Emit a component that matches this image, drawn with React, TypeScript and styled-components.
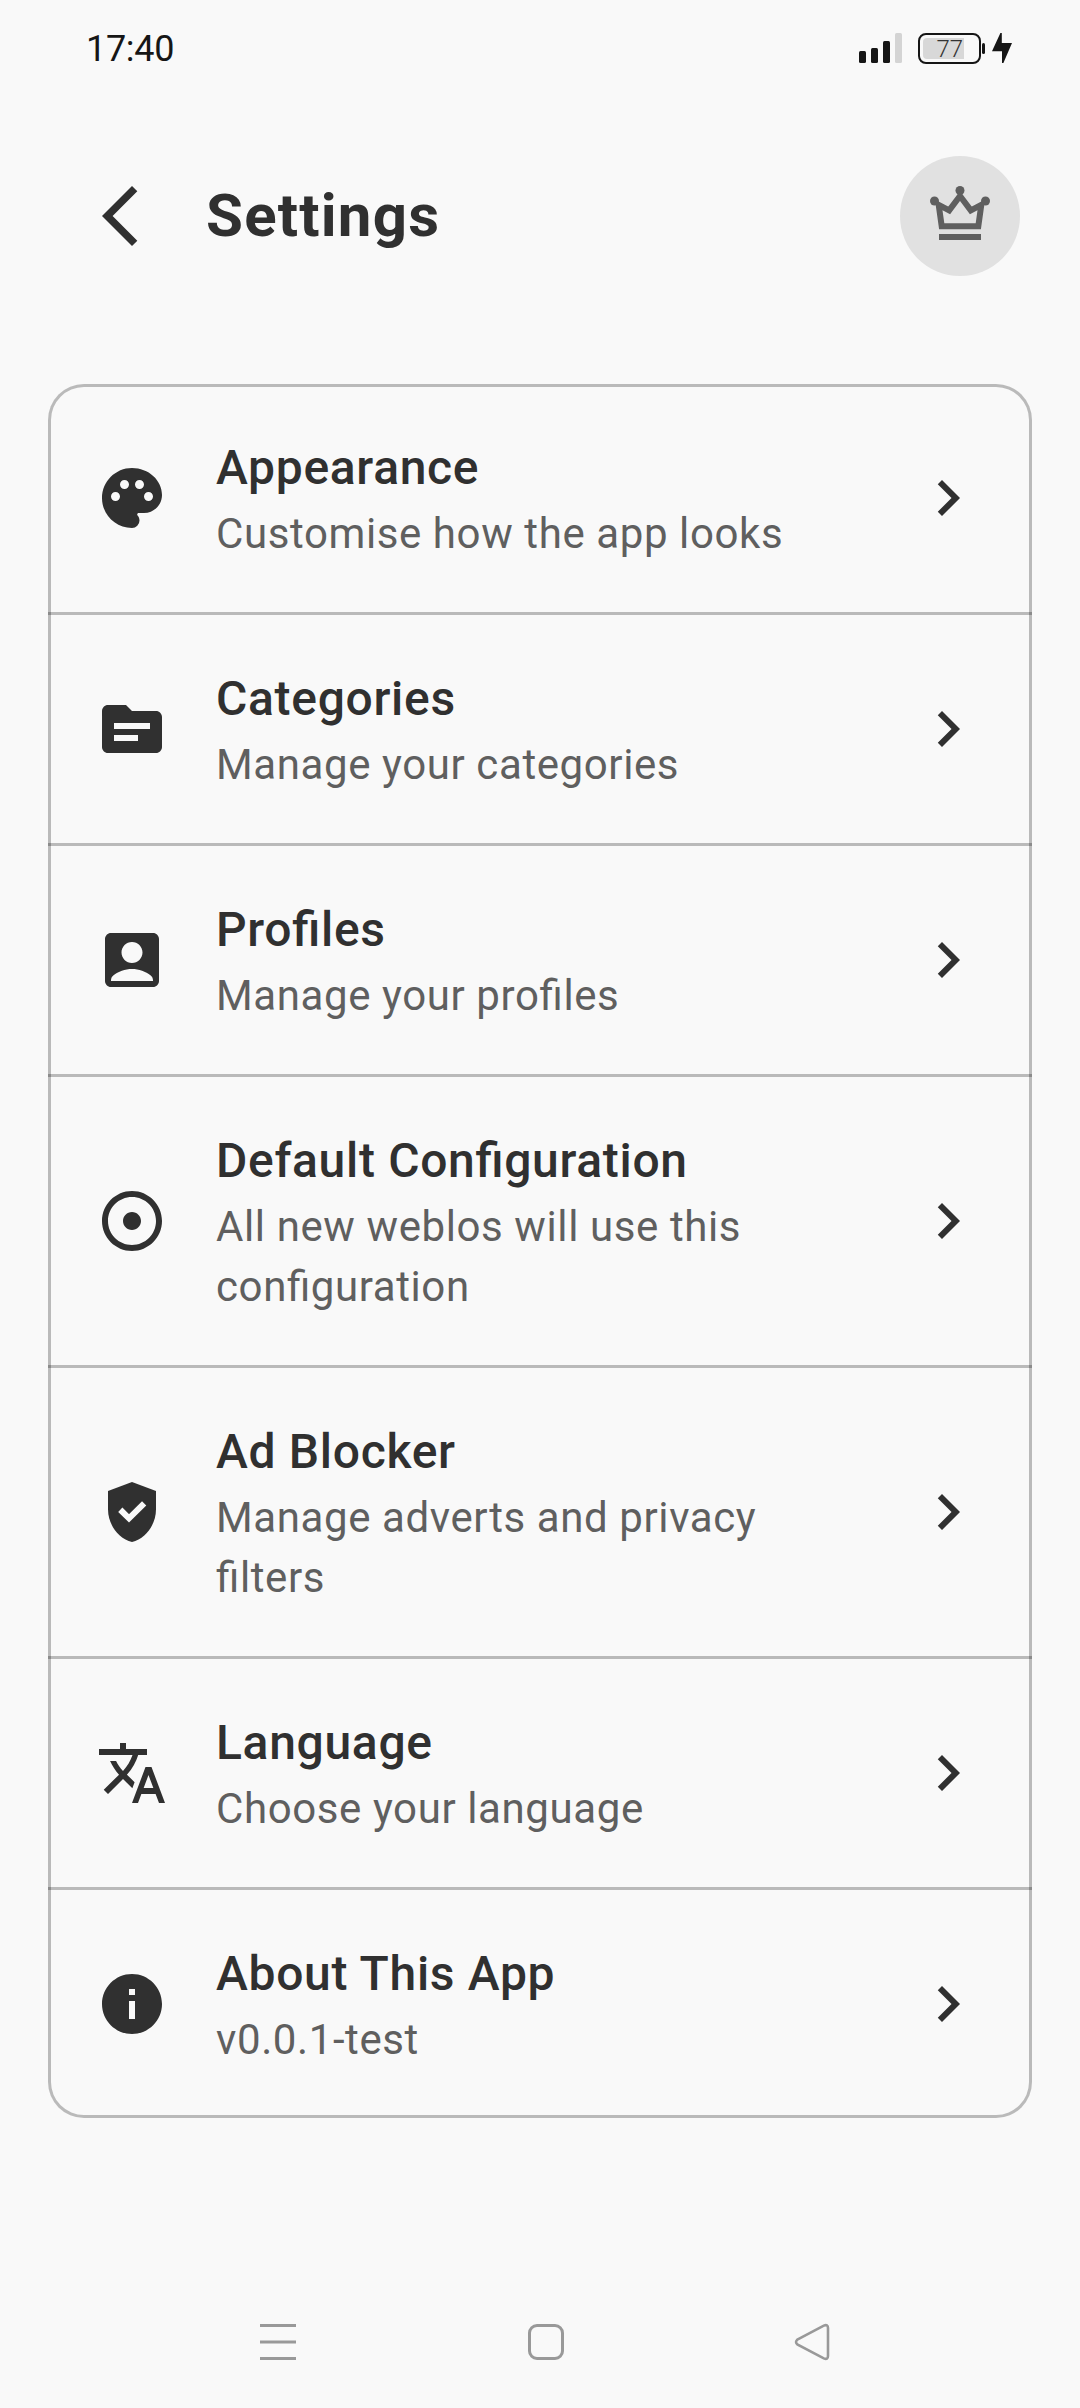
import React from 'react';
import styled, { createGlobalStyle } from 'styled-components';
import {
  MdAccountBox,
  MdAdjust,
  MdArrowBackIosNew,
  MdChevronRight,
  MdInfo,
  MdPalette,
  MdTopic,
  MdTranslate,
} from 'react-icons/md';

const ink = '#303030';
const muted = '#5f5f5f';
const line = 'rgba(0, 0, 0, 0.25)';

const GlobalStyle = createGlobalStyle`
  * { box-sizing: border-box; }
  body {
    margin: 0;
    background: #f9f9f9;
    font-family: Roboto, sans-serif;
    font-feature-settings: 'liga' 1;
  }
`;

const Screen = styled.div`
  display: flex;
  flex-direction: column;
  width: 1080px;
  height: 2408px;
  color: ${ink};
  background: #f9f9f9;
`;

const StatusBar = styled.div`
  display: flex;
  align-items: center;
  justify-content: space-between;
  height: 96px;
  padding: 0 68px 0 86px;
  color: #161616;
`;

const Clock = styled.span`
  padding-top: 2px;
  font-size: 36px;
  line-height: 42px;
  letter-spacing: -0.3px;
`;

const StatusIcons = styled.div`
  display: flex;
  align-items: center;
`;

const Signal = styled.div`
  display: flex;
  align-items: flex-end;
  gap: 5px;
  height: 30px;
  margin-right: 16px;
`;

const Bar = styled.span<{ $height: number; $dim?: boolean }>`
  width: 7px;
  height: ${(p) => p.$height}px;
  border-radius: 1.5px;
  background: ${(p) => (p.$dim ? '#d4d4d4' : '#161616')};
`;

const Battery = styled.div`
  display: flex;
  width: 63px;
  height: 31px;
  padding: 3px;
  border: 2px solid #161616;
  border-radius: 8px;
`;

const Charge = styled.div`
  display: flex;
  align-items: center;
  justify-content: flex-end;
  width: 41px;
  height: 21px;
  padding: 2px 1px 0 0;
  border-radius: 4px 0 0 4px;
  background: #d8d8d8;
  color: #333;
  font-size: 24px;
  font-weight: 300;
  line-height: 21px;
`;

const BatteryTip = styled.span`
  width: 3px;
  height: 11px;
  margin: 0 7px 0 1px;
  border-radius: 1.5px;
  background: #161616;
`;

const Header = styled.header`
  display: flex;
  align-items: center;
  gap: 48px;
  height: 240px;
  padding: 0 60px 0 84px;
`;

const PageTitle = styled.h1`
  flex: 1;
  margin: 0;
  padding-left: 2px;
  font-size: 60px;
  font-weight: 700;
  line-height: 72px;
  letter-spacing: 1.2px;
`;

const CrownButton = styled.button`
  display: grid;
  place-items: center;
  width: 120px;
  height: 120px;
  padding: 0;
  border: 0;
  border-radius: 50%;
  background: #e1e1e1;
  color: ${muted};
`;

const Card = styled.section`
  display: flex;
  flex-direction: column;
  margin: 48px 48px 0;
  border-radius: 36px;
  box-shadow: inset 0 0 0 3px ${line};
`;

const Row = styled.div`
  display: flex;
  align-items: center;
  gap: 48px;
  padding: 48px;

  & > svg {
    flex: none;
  }
`;

const Divider = styled.div`
  height: 3px;
  background: ${line};
`;

const Labels = styled.div`
  flex: 1;
  min-width: 0;
`;

const RowTitle = styled.div`
  font-size: 48px;
  font-weight: 500;
  line-height: 72px;
  letter-spacing: 0.68px;
`;

const RowNote = styled.div`
  color: ${muted};
  font-size: 42px;
  line-height: 60px;
  letter-spacing: 0.6px;
`;

const NavBar = styled.nav`
  display: flex;
  align-items: center;
  justify-content: space-between;
  height: 132px;
  margin-top: auto;
  padding: 0 246px 0 258px;
`;

const Crown = () => (
  <svg width="72" height="72" viewBox="0 0 24 24" fill="currentColor">
    <circle cx="3.5" cy="7" r="1.5" />
    <circle cx="12" cy="3.5" r="1.5" />
    <circle cx="20.5" cy="7" r="1.5" />
    <path d="M5 18h14v2H5z" />
    <path
      d="M4.9 8.3 8.4 10.1 12 5.3l3.6 4.8 3.5-1.8-1 7.1H5.9z"
      fill="none"
      stroke="currentColor"
      strokeWidth="2"
    />
  </svg>
);

const Shield = () => (
  <svg width="72" height="72" viewBox="0 0 24 24">
    <path fill="currentColor" d="M12 2 4 5v6.1c0 5.05 3.41 9.76 8 10.9 4.59-1.14 8-5.85 8-10.9V5z" />
    <path fill="none" stroke="#f9f9f9" strokeWidth="2" d="M8.1 11.25 11 14.1l5.05-5" />
  </svg>
);

const Bolt = () => (
  <svg width="20" height="30" viewBox="0 0 20 30" fill="currentColor">
    <path d="M8.4 0h1.4v10H20l-8.6 20H10V18.200H0z" />
  </svg>
);

const items = [
  { icon: <MdPalette size={72} />, title: 'Appearance', note: 'Customise how the app looks' },
  { icon: <MdTopic size={72} />, title: 'Categories', note: 'Manage your categories' },
  { icon: <MdAccountBox size={72} />, title: 'Profiles', note: 'Manage your profiles' },
  { icon: <MdAdjust size={72} />, title: 'Default Configuration', note: 'All new weblos will use this configuration' },
  { icon: <Shield />, title: 'Ad Blocker', note: 'Manage adverts and privacy filters' },
  { icon: <MdTranslate size={72} />, title: 'Language', note: 'Choose your language' },
  { icon: <MdInfo size={72} />, title: 'About This App', note: 'v0.0.1-test' },
];

export default function App() {
  return (
    <Screen>
      <GlobalStyle />
      <StatusBar>
        <Clock>17:40</Clock>
        <StatusIcons>
          <Signal>
            <Bar $height={12} />
            <Bar $height={15} />
            <Bar $height={22} />
            <Bar $height={30} $dim />
          </Signal>
          <Battery>
            <Charge>77</Charge>
          </Battery>
          <BatteryTip />
          <Bolt />
        </StatusIcons>
      </StatusBar>
      <Header>
        <MdArrowBackIosNew size={72} />
        <PageTitle>Settings</PageTitle>
        <CrownButton aria-label="Premium">
          <Crown />
        </CrownButton>
      </Header>
      <Card>
        {items.map((item, i) => (
          <React.Fragment key={item.title}>
            {i > 0 && <Divider />}
            <Row>
              {item.icon}
              <Labels>
                <RowTitle>{item.title}</RowTitle>
                <RowNote>{item.note}</RowNote>
              </Labels>
              <MdChevronRight size={72} />
            </Row>
          </React.Fragment>
        ))}
      </Card>
      <NavBar>
        <svg width="40" height="40" viewBox="0 0 40 40" fill="none" stroke="#999" strokeWidth="3">
          <path d="M2 3.5h36M2 20h36M2 36.5h36" />
        </svg>
        <svg width="40" height="40" viewBox="0 0 40 40" fill="none" stroke="#999" strokeWidth="3">
          <rect x="3.5" y="3.5" width="33" height="33" rx="7.5" />
        </svg>
        <svg width="40" height="40" viewBox="0 0 40 40" fill="none" stroke="#999" strokeWidth="2.6">
          <path d="M3.3 17.6 29.8 3.6Q34 2 34 6v28q0 4-4.2 2.4L3.3 22.4Q.8 20 3.3 17.6z" />
        </svg>
      </NavBar>
    </Screen>
  );
}
